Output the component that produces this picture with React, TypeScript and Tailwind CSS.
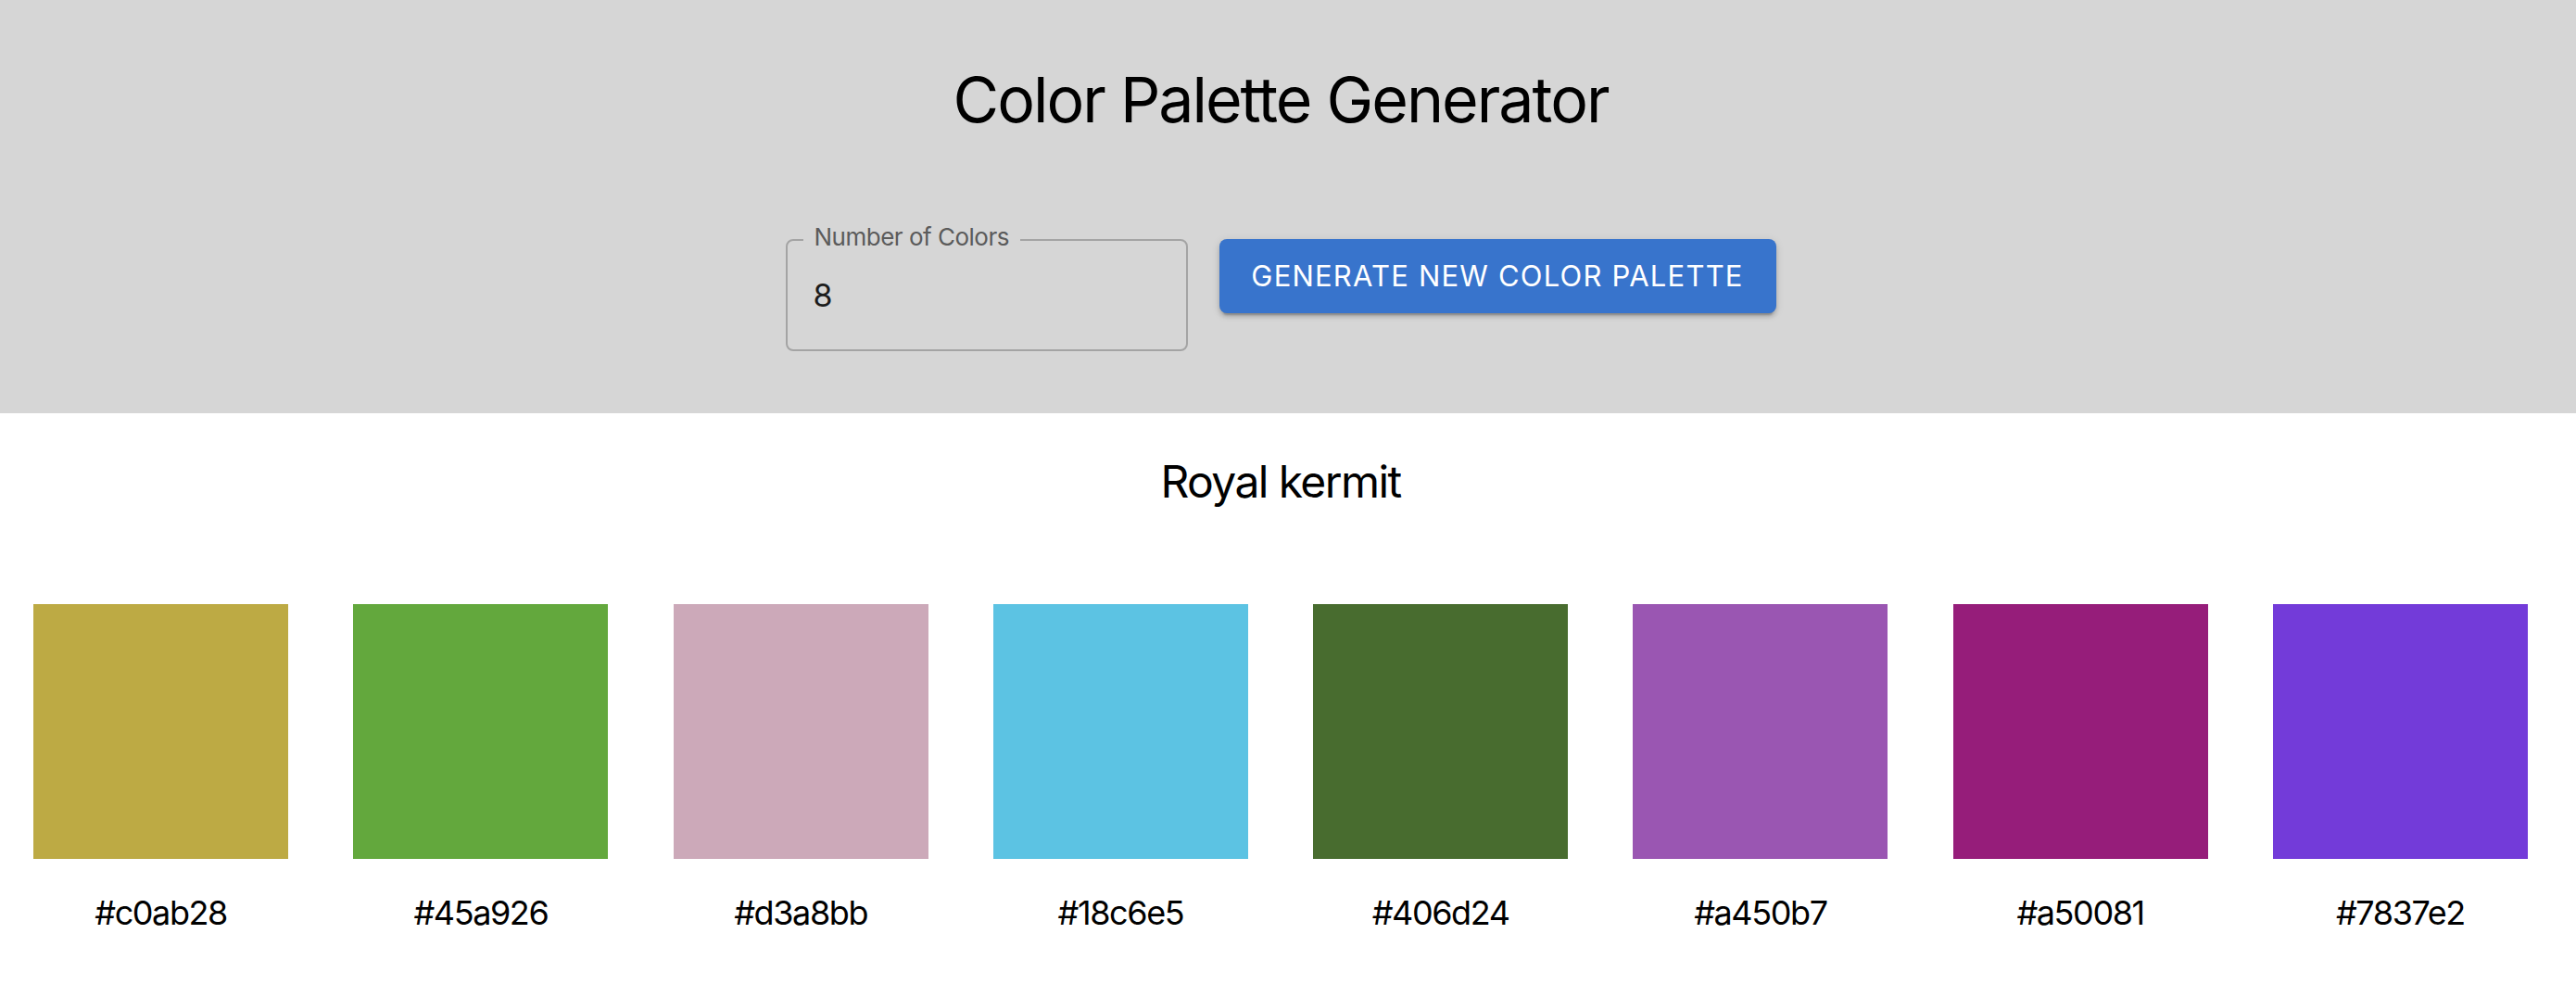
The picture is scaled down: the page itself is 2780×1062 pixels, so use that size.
import { useState } from "react";

type Swatch = {
  hex: string;
  // what the screen actually showed for this hex
  shown: string;
};

const palette: Swatch[] = [
  { hex: "#c0ab28", shown: "#bdaa44" },
  { hex: "#45a926", shown: "#63a83d" },
  { hex: "#d3a8bb", shown: "#cca9b9" },
  { hex: "#18c6e5", shown: "#5cc3e3" },
  { hex: "#406d24", shown: "#486c2f" },
  { hex: "#a450b7", shown: "#9a56b2" },
  { hex: "#a50081", shown: "#961d7a" },
  { hex: "#7837e2", shown: "#733bd9" },
];

function CountField({ value, onChange }: { value: string; onChange: (v: string) => void }) {
  return (
    <div className="relative w-[434px] h-[121px] border-2 border-[#a4a4a4] rounded-[8px]">
      <span className="absolute -top-[17px] left-[17px] px-[12px] bg-[#d6d6d6] text-[26px] leading-[26px] tracking-[-0.5px] text-[#5b5b5b]">
        Number of Colors
      </span>
      <input
        className="w-full h-full bg-transparent outline-none px-[28px] text-[34px] text-[#1c1c1c]"
        value={value}
        onChange={(e) => onChange(e.target.value)}
      />
    </div>
  );
}

export default function App() {
  const [count, setCount] = useState("8");

  return (
    <div className="min-h-screen bg-white font-['Inter',sans-serif] text-black">
      <header className="bg-[#d6d6d6] h-[446px]">
        <div className="w-[2764px] flex flex-col items-center pt-[65px]">
          <h1 className="text-[68px] leading-[84px] font-normal tracking-[-2px]">Color Palette Generator</h1>

          <div className="flex items-start gap-[34px] mt-[109px]">
            <CountField value={count} onChange={setCount} />
            <button className="w-[601px] h-[80px] rounded-[8px] bg-[#3874cc] text-white text-[31px] font-normal tracking-[1.2px] shadow-[0_6px_2px_-4px_rgba(0,0,0,0.2),0_4px_4px_0_rgba(0,0,0,0.14),0_2px_10px_0_rgba(0,0,0,0.12)]">
              GENERATE NEW COLOR PALETTE
            </button>
          </div>
        </div>
      </header>

      <section className="w-[2764px] flex flex-col items-center pt-[42px]">
        <h2 className="text-[48px] leading-[64px] font-normal tracking-[-1.6px]">Royal kermit</h2>

        <div className="w-[2762px] grid grid-cols-8 mt-[100px]">
          {palette.map((c) => (
            <div key={c.hex} className="flex flex-col items-center">
              <div className="w-[275px] h-[275px]" style={{ backgroundColor: c.shown }} />
              <div className="mt-[31px] text-[36px] leading-[54px] tracking-[-1.4px]">{c.hex}</div>
            </div>
          ))}
        </div>
      </section>
    </div>
  );
}
